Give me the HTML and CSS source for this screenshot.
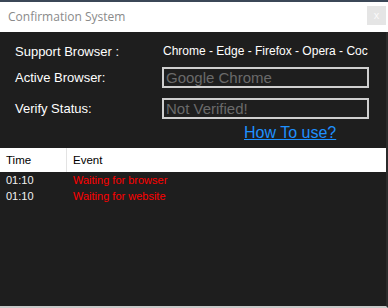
FILE: index.html
```html
<!DOCTYPE html>
<html lang="en">
  <head>
    <meta charset="UTF-8" />
    <meta name="viewport" content="width=device-width, initial-scale=1.0" />
    <title>Confirmation System</title>
    <link rel="stylesheet" href="styles.css">
  </head>
  <body>
    <div class="window">
      <!-- Title bar -->
      <div class="titlebar">
        <span class="title">Confirmation System</span>
        <button class="close-btn">x</button>
      </div>

      <div class="content">
        <!-- Browser info form -->
        <div class="form">
          <div class="label row-support">Support Browser :</div>
          <div class="value row-support">Chrome - Edge - Firefox - Opera - Coc</div>

          <div class="label row-input">Active Browser:</div>
          <div class="value row-input"><div class="field">Google Chrome</div></div>

          <div class="label row-input">Verify Status:</div>
          <div class="value row-input"><div class="field">Not Verified!</div></div>

          <div class="label row-link"></div>
          <div class="value row-link"><a href="#" class="help-link">How To use?</a></div>
        </div>

        <!-- Event log -->
        <div class="log">
          <div class="log-header">
            <div class="col-time">Time</div>
            <div class="col-event">Event</div>
          </div>
          <div class="log-row">
            <div class="col-time">01:10</div>
            <div class="col-event">Waiting for browser</div>
          </div>
          <div class="log-row">
            <div class="col-time">01:10</div>
            <div class="col-event">Waiting for website</div>
          </div>
        </div>
      </div>
    </div>
  </body>
</html>
```

FILE: styles.css
```css
/* General body styling */
body {
  margin: 0;
  background-color: #1e1e1e;
  font-family: "Liberation Sans", Arial, sans-serif;
}

.window {
  width: 388px;
  height: 308px;
  display: flex;
  flex-direction: column;
  overflow: hidden;
}

/* Title bar */
.titlebar {
  height: 30px;
  border-top: 2px solid #3b4757;
  background: #fff;
  display: flex;
  align-items: center;
  justify-content: space-between;
  padding-left: 8px;
  padding-right: 2px;
}

.title {
  font-family: "Open Sans", "Noto Sans", sans-serif;
  font-size: 12px;
  color: #8a8a8a;
  margin-top: -2px;
}

.close-btn {
  width: 19px;
  height: 19px;
  margin-top: -4px;
  border: none;
  padding: 0;
  background: #e5e5e5;
  color: #fafafa;
  font-family: "Liberation Sans", Arial, sans-serif;
  font-size: 11px;
}

/* Main area */
.content {
  flex: 1;
  background: #1e1e1e;
  border-bottom: 2px solid #c9c9c9;
  border-right: 2px solid #2b2b2b;
  display: flex;
  flex-direction: column;
}

.form {
  display: grid;
  grid-template-columns: 147px 207px;
  padding: 10px 0 0 15px;
  color: #fff;
}

.label {
  font-size: 13px;
  display: flex;
  align-items: center;
}

.value {
  display: flex;
  align-items: center;
  white-space: nowrap;
}

.row-support {
  height: 18px;
  margin-bottom: 7px;
}

.value.row-support {
  font-size: 12px;
  padding-left: 1px;
}

.row-input {
  height: 21px;
  margin-bottom: 10px;
}

.field {
  box-sizing: border-box;
  width: 207px;
  height: 21px;
  border: 2px solid #cfcfcf;
  padding-left: 2px;
  font-size: 15px;
  line-height: 17px;
  color: #6a6a6a;
}

.row-link {
  height: 22px;
  margin-top: -7px;
}

.help-link {
  margin-left: 82px;
  font-size: 16px;
  color: #1e90ff;
}

/* Event log table */
.log {
  margin-top: 4px;
  font-size: 11px;
}

.log-header {
  display: flex;
  height: 24px;
  background: #fff;
  color: #000;
  font-size: 11.5px;
}

.log-header .col-time {
  border-right: 1px solid #e3e3e3;
}

.log-row {
  display: flex;
  height: 16px;
}

.col-time {
  width: 60px;
  padding-left: 6px;
  display: flex;
  align-items: center;
}

.col-event {
  padding-left: 6px;
  display: flex;
  align-items: center;
}

.log-row .col-time {
  width: 61px;
  color: #f2f2f2;
}

.log-row .col-event {
  color: #ff0000;
}
```
